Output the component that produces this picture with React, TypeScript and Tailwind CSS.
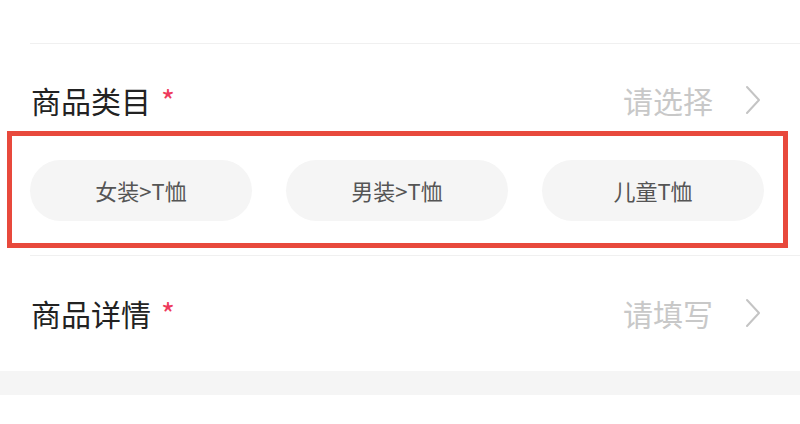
import React from "react";

const categories = ["女装>T恤", "男装>T恤", "儿童T恤"];

const Chevron = () => (
  <svg className="w-[16px] h-[30px] text-[#c4c4c4]" viewBox="0 0 16 30" fill="none" stroke="currentColor">
    <path d="M2 2l12 13L2 28" strokeWidth={2} strokeLinecap="round" strokeLinejoin="round" />
  </svg>
);

const FieldRow = ({ label, placeholder }: { label: string; placeholder: string }) => (
  <div className="flex items-center justify-between h-[40px] pl-[31px] pr-[39px]">
    <div className="flex items-center">
      <span className="text-[30px] leading-[40px] text-[#222]">{label}</span>
      <span className="ml-[10px] text-[30px] leading-[40px] text-[#ee3b5c]">*</span>
    </div>
    <div className="flex items-center gap-[32px]">
      <span className="text-[30px] leading-[40px] text-[#c8c8c8]">{placeholder}</span>
      <Chevron />
    </div>
  </div>
);

export default function App() {
  return (
    <div
      className="w-[800px] h-[424px] bg-white overflow-hidden"
      style={{ fontFamily: '"Noto Sans CJK SC", "Noto Sans", sans-serif' }}
    >
      <div className="h-[43px]" />
      <div className="ml-[30px] border-t border-[#f0f0f0]" />

      {/* 商品类目 */}
      <div className="pt-[36px]">
        <FieldRow label="商品类目" placeholder="请选择" />
      </div>
      <div className="mt-[11px] ml-[7px] w-[781px] h-[117px] border-[5px] border-[#e8493c] pt-[24px] pl-[18px] flex gap-[34px]">
        {categories.map((c) => (
          <div
            key={c}
            className="w-[222px] h-[61px] shrink-0 rounded-full bg-[#f5f5f5] flex items-center justify-center text-[22px] text-[#555]"
          >
            {c}
          </div>
        ))}
      </div>
      <div className="mt-[7px] ml-[30px] border-t border-[#f0f0f0]" />

      {/* 商品详情 */}
      <div className="h-[115px] flex items-center">
        <div className="w-full -mt-[2px]">
          <FieldRow label="商品详情" placeholder="请填写" />
        </div>
      </div>
      <div className="h-[24px] bg-[#f5f5f5]" />
    </div>
  );
}
